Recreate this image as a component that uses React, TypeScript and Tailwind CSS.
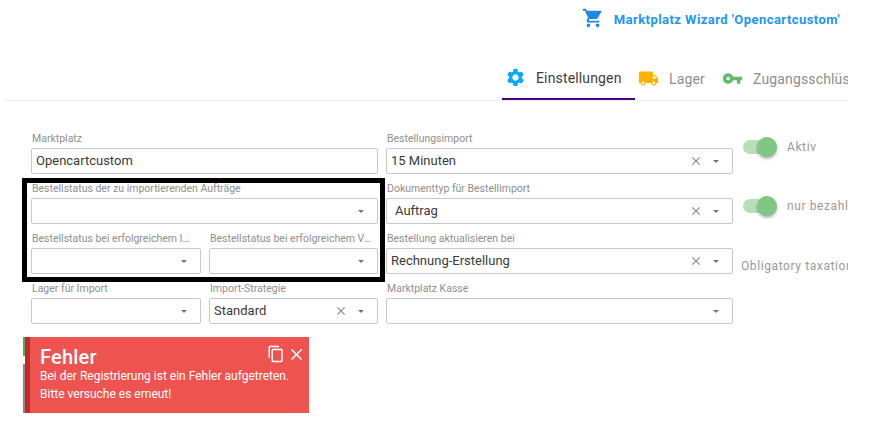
import type { ReactNode } from 'react';

const Icon = ({ d, className }: { d: string; className: string }) => (
  <svg viewBox="0 0 24 24" fill="currentColor" className={className}>
    <path d={d} />
  </svg>
);

const icons = {
  cart: 'M7 18c-1.1 0-1.99.9-1.99 2S5.9 22 7 22s2-.9 2-2-.9-2-2-2zM1 2v2h2l3.6 7.59-1.35 2.45c-.16.28-.25.61-.25.96 0 1.1.9 2 2 2h12v-2H7.42c-.14 0-.25-.11-.25-.25l.03-.12.9-1.63h7.45c.75 0 1.41-.41 1.75-1.03L21.7 4H5.21l-.94-2H1zm16 16c-1.1 0-1.99.9-1.99 2s.89 2 1.99 2 2-.9 2-2-.9-2-2-2z',
  gear: 'M19.14 12.94c.04-.3.06-.61.06-.94 0-.32-.02-.64-.07-.94l2.03-1.58c.18-.14.23-.41.12-.61l-1.92-3.32c-.12-.22-.37-.29-.59-.22l-2.39.96c-.5-.38-1.03-.7-1.62-.94l-.36-2.54c-.04-.24-.24-.41-.48-.41h-3.84c-.24 0-.43.17-.47.41l-.36 2.54c-.59.24-1.13.57-1.62.94l-2.39-.96c-.22-.08-.47 0-.59.22L2.74 8.87c-.12.21-.08.47.12.61l2.03 1.58c-.05.3-.09.63-.09.94s.02.64.07.94l-2.03 1.58c-.18.14-.23.41-.12.61l1.92 3.32c.12.22.37.29.59.22l2.39-.96c.5.38 1.03.7 1.62.94l.36 2.54c.05.24.24.41.48.41h3.84c.24 0 .44-.17.47-.41l.36-2.54c.59-.24 1.13-.56 1.62-.94l2.39.96c.22.08.47 0 .59-.22l1.92-3.32c.12-.22.07-.47-.12-.61l-2.01-1.58zM12 15.6c-1.98 0-3.6-1.62-3.6-3.6s1.62-3.6 3.6-3.6 3.6 1.62 3.6 3.6-1.62 3.6-3.6 3.6z',
  truck: 'M20 8h-3V4H3c-1.1 0-2 .9-2 2v11h2c0 1.66 1.34 3 3 3s3-1.34 3-3h6c0 1.66 1.34 3 3 3s3-1.34 3-3h2v-5l-3-4zM6 18.5c-.83 0-1.5-.67-1.5-1.5s.67-1.5 1.5-1.5 1.5.67 1.5 1.5-.67 1.5-1.5 1.5zm13.5-9l1.96 2.5H17V9.5h2.5zm-1.5 9c-.83 0-1.5-.67-1.5-1.5s.67-1.5 1.5-1.5 1.5.67 1.5 1.5-.67 1.5-1.5 1.5z',
  key: 'M12.65 10C11.83 7.67 9.61 6 7 6c-3.31 0-6 2.69-6 6s2.69 6 6 6c2.61 0 4.83-1.67 5.65-4H17v4h4v-4h2v-4H12.65zM7 14c-1.1 0-2-.9-2-2s.9-2 2-2 2 .9 2 2-.9 2-2 2z',
  copy: 'M16 1H4c-1.1 0-2 .9-2 2v14h2V3h12V1zm3 4H8c-1.1 0-2 .9-2 2v14c0 1.1.9 2 2 2h11c1.1 0 2-.9 2-2V7c0-1.1-.9-2-2-2zm0 16H8V7h11v14z',
  close: 'M19 6.41L17.59 5 12 10.59 6.41 5 5 6.41 10.59 12 5 17.59 6.41 19 12 13.41 17.59 19 19 17.59 13.41 12z',
};

type FieldProps = {
  label: string;
  value?: string;
  clearable?: boolean;
  select?: boolean;
  indent?: boolean;
};

const Field = ({ label, value, clearable, select = true, indent }: FieldProps) => (
  <div className="min-w-0">
    <div className="h-[20px] truncate pl-px pr-[6px] text-[10.5px] leading-[22px] text-[#8f8f8f]">{label}</div>
    <div className="flex h-[26px] items-center rounded-[2px] border border-[#c8c8c8] bg-white">
      <span className={`flex-1 truncate text-[13px] text-[#3a3a3a] ${indent ? 'pl-[8px]' : 'pl-[4px]'}`}>
        {value}
      </span>
      {clearable && <Icon d={icons.close} className="mr-[10px] h-[14px] w-[14px] text-[#8a8a8a]" />}
      {select && <span className="mr-[13px] h-0 w-0 border-x-[3px] border-t-[3px] border-x-transparent border-t-[#757575]" />}
    </div>
  </div>
);

const Toggle = ({ label, className }: { label: string; className: string }) => (
  <div className={`flex h-[18px] items-center ${className}`}>
    <div className="relative h-[14px] w-[34px] shrink-0 rounded-full bg-[#b7dfb8]">
      <div className="absolute -top-[3px] right-0 h-[20px] w-[20px] rounded-full bg-[#81c784] shadow-[0_2px_3px_rgba(0,0,0,0.3)]" />
    </div>
    <span className="ml-[10px] whitespace-nowrap text-[12px] tracking-[0.6px] text-[#9a9a9a]">{label}</span>
  </div>
);

const Tab = ({ children, label, active, className }: { children: ReactNode; label: string; active?: boolean; className: string }) => (
  <div className={`flex h-[46px] shrink-0 items-center pt-[3px] ${active ? '-mb-px border-b-2 border-[#4a0080]' : ''} ${className}`}>
    {children}
    <span className={`whitespace-nowrap pt-px text-[14px] tracking-[0.15px] ${active ? 'text-[#3d3d3d]' : 'text-[#8e8e8e]'}`}>{label}</span>
  </div>
);

export default function App() {
  return (
    <div className="relative h-[434px] w-[879px] overflow-hidden bg-white font-['Roboto',sans-serif]">
      <div className="w-[848px] overflow-hidden">
        <div className="flex h-[54px] items-start justify-end pt-[7px]">
          <Icon d={icons.cart} className="h-[22px] w-[22px] text-[#1e88e5]" />
          <span className="ml-[10px] mr-[8px] mt-[4px] text-[13px] font-bold leading-[18px] tracking-[0.45px] text-[#2196f3]">
            Marktplatz Wizard 'Opencartcustom'
          </span>
        </div>

        <div className="ml-[3px] flex h-[47px] justify-start overflow-hidden border-b border-[#eeeeee] pl-[499px]">
          <Tab active label="Einstellungen" className="w-[133px] pl-[3px]">
            <Icon d={icons.gear} className="mr-[10px] h-[21px] w-[21px] text-[#03a9f4]" />
          </Tab>
          <Tab label="Lager" className="ml-[3px] w-[84px]">
            <Icon d={icons.truck} className="mr-[10px] h-[21px] w-[21px] text-[#ffb300]" />
          </Tab>
          <Tab label="Zugangsschlüssel" className="">
            <Icon d={icons.key} className="mr-[10px] h-[21px] w-[21px] text-[#66bb6a]" />
          </Tab>
        </div>

        <div className="flex pl-[31px] pt-[27px]">
          <div className="grid w-[702px] grid-cols-[347px_347px] gap-x-[8px] gap-y-[4px]">
            <Field label="Marktplatz" value="Opencartcustom" select={false} />
            <Field label="Bestellungsimport" value="15 Minuten" clearable />
            <Field label="Bestellstatus der zu importierenden Aufträge" />
            <Field label="Dokumenttyp für Bestellimport" value="Auftrag" clearable indent />
            <div className="grid grid-cols-[170px_169px] gap-x-[8px]">
              <Field label="Bestellstatus bei erfolgreichem Import" />
              <Field label="Bestellstatus bei erfolgreichem Versand" />
            </div>
            <Field label="Bestellung aktualisieren bei" value="Rechnung-Erstellung" clearable />
            <div className="grid grid-cols-[170px_169px] gap-x-[8px]">
              <Field label="Lager für Import" />
              <Field label="Import-Strategie" value="Standard" clearable />
            </div>
            <Field label="Marktplatz Kasse" />
          </div>

          <div className="ml-[8px] w-[107px] shrink-0 overflow-hidden pb-[6px] pl-[2px] pt-[6px]">
            <Toggle label="Aktiv" className="mt-[4px]" />
            <Toggle label="nur bezahlte Aufträge" className="mt-[41px]" />
            <div className="-ml-[2px] mt-[42px] whitespace-nowrap text-[12px] leading-[18px] tracking-[0.6px] text-[#9a9a9a]">
              Obligatory taxation
            </div>
          </div>
        </div>
      </div>

      <div className="ml-[23px] mt-[13px] flex h-[76px] w-[286px]">
        <div className="flex w-[2px] flex-col">
          <div className="h-[19px] bg-[#4caf50]" />
          <div className="h-[8px] bg-white" />
          <div className="flex-1 bg-[#8a8a8a]" />
        </div>
        <div className="w-[5px] bg-[#c62828]" />
        <div className="relative flex-1 bg-[#ef5350] pl-[10px] pt-[10px] text-white">
          <div className="text-[20px] font-medium leading-[20px] tracking-[0.2px]">Fehler</div>
          <div className="text-[12px] leading-[18px]">Bei der Registrierung ist ein Fehler aufgetreten.</div>
          <div className="text-[12px] leading-[18px]">Bitte versuche es erneut!</div>
          <div className="absolute right-[3px] top-[8px] flex items-center gap-[2px]">
            <Icon d={icons.copy} className="-mt-[2px] h-[18px] w-[18px]" />
            <Icon d={icons.close} className="h-[19px] w-[19px]" />
          </div>
        </div>
      </div>

      {/* annotation frame drawn over the form */}
      <div className="absolute left-[22px] top-[178px] h-[104px] w-[363px] border-[5px] border-black" />
    </div>
  );
}
